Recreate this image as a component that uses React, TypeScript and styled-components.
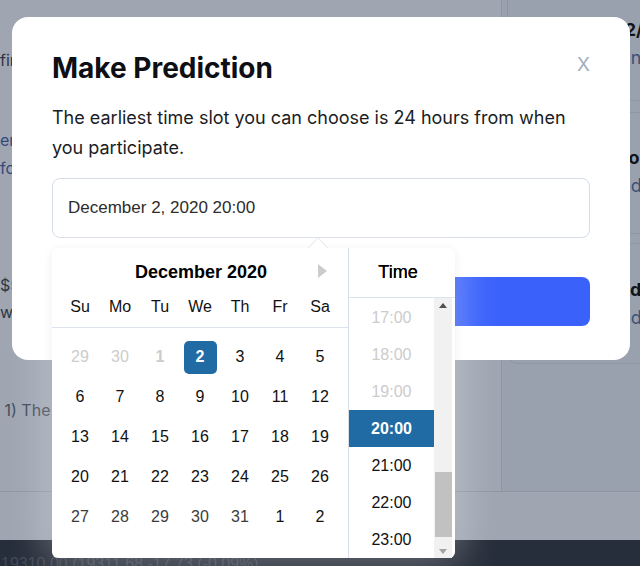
import styled, { createGlobalStyle } from "styled-components";

const GlobalStyle = createGlobalStyle`
  html, body {
    margin: 0;
    padding: 0;
  }
  body {
    width: 640px;
    height: 566px;
    overflow: hidden;
    background: #9fa6b2;
    font-family: Inter, "Noto Sans", sans-serif;
  }
  * {
    box-sizing: border-box;
  }
`;

const Page = styled.div`
  position: relative;
  width: 640px;
  height: 566px;
  display: grid;
  grid-template-rows: 492px 48px 26px;
  overflow: hidden;
`;

const Main = styled.div`
  display: grid;
  grid-template-columns: 501px 139px;
  border-bottom: 1px solid #8e96a3;
  overflow: hidden;
`;

const LeftCol = styled.div`
  display: flex;
  flex-direction: column;
  white-space: nowrap;
  overflow: hidden;
`;

const BgLine = styled.div<{ $mt: number; $tone?: "dark" | "blue" | "muted" }>`
  margin-top: ${(p) => p.$mt}px;
  font-size: 16px;
  line-height: 24px;
  color: ${(p) =>
    p.$tone === "blue" ? "#34497a" : p.$tone === "muted" ? "#444c5c" : "#2f3542"};
`;

const Sidebar = styled.div`
  border-left: 1px solid #8e96a3;
  background: #99a1ae;
  padding-left: 5px;
  display: flex;
  flex-direction: column;
  white-space: nowrap;
  overflow: hidden;
`;

const SideCard = styled.div<{ $mt: number; $h: number; $pt: number }>`
  margin-top: ${(p) => p.$mt}px;
  height: ${(p) => p.$h}px;
  width: 220px;
  flex-shrink: 0;
  padding: ${(p) => p.$pt}px 0 0 109px;
  border: 1px solid #8e96a3;
  border-radius: 10px;
`;

const SideTitle = styled.div`
  font-size: 18px;
  line-height: 28px;
  font-weight: 700;
  color: #111418;
`;

const SideSub = styled.div`
  font-size: 18px;
  line-height: 28px;
  color: #3e5078;
`;

const Gutter = styled.div``;

const Ticker = styled.div`
  background: #272e3b;
  padding: 12px 0 0 1px;
  font-family: "Liberation Sans", Arial, sans-serif;
  font-size: 16px;
  line-height: 24px;
  color: #404858;
  white-space: nowrap;
`;

const Modal = styled.div`
  position: absolute;
  top: 17px;
  left: 12px;
  width: 618px;
  background: #ffffff;
  border-radius: 16px;
  padding: 34px 40px 34px;
  z-index: 1;
`;

const ModalHeader = styled.div`
  display: flex;
  align-items: center;
  justify-content: space-between;
`;

const Title = styled.h2`
  margin: 0;
  font-size: 28px;
  line-height: 34px;
  font-weight: 700;
  color: #0d0f14;
`;

const CloseButton = styled.button`
  border: 0;
  background: none;
  padding: 0;
  font-family: Inter, sans-serif;
  font-size: 19px;
  line-height: 20px;
  color: #a3aec2;
  margin-top: -6px;
  cursor: pointer;
`;

const Description = styled.p`
  margin: 18px 0 0;
  font-size: 18px;
  line-height: 30px;
  color: #1a1d24;
`;

const Field = styled.div`
  position: relative;
  margin-top: 15px;
`;

const DateInput = styled.div`
  height: 60px;
  border: 1px solid #d6dce7;
  border-radius: 8px;
  padding: 0 15px;
  display: flex;
  align-items: center;
  font-family: "Liberation Sans", Arial, sans-serif;
  font-size: 17px;
  color: #2b2b2b;
`;

const SubmitButton = styled.button`
  display: block;
  width: 100%;
  height: 49px;
  margin-top: 39px;
  border: 0;
  border-radius: 8px;
  background: #3a62fb;
  color: #fff;
  font-family: Inter, sans-serif;
  font-size: 18px;
  font-weight: 600;
`;

const Popup = styled.div`
  position: absolute;
  top: calc(100% + 10px);
  left: 0;
  width: 403px;
  height: 310px;
  background: #fff;
  border-radius: 6px;
  box-shadow: 0 0 40px 4px rgba(255, 255, 255, 0.35), 0 2px 10px rgba(0, 0, 0, 0.08);
  display: flex;
  font-family: "Liberation Sans", Arial, sans-serif;
  z-index: 2;

  &::before,
  &::after {
    content: "";
    position: absolute;
    left: 256px;
    width: 0;
    height: 0;
    border-left: 10px solid transparent;
    border-right: 10px solid transparent;
  }
  &::before {
    top: -11px;
    border-bottom: 11px solid #dfe3ea;
  }
  &::after {
    top: -10px;
    left: 257px;
    border-left-width: 9px;
    border-right-width: 9px;
    border-bottom: 10px solid #fff;
  }
`;

const Calendar = styled.div`
  width: 297px;
  border-right: 1px solid #d8dee9;
  display: flex;
  flex-direction: column;
`;

const CalHeader = styled.div`
  position: relative;
  height: 80px;
  padding-top: 12px;
  border-bottom: 1px solid #dde3ec;
`;

const MonthTitle = styled.div`
  text-align: center;
  font-size: 18px;
  line-height: 24px;
  font-weight: 700;
  color: #000;
  padding-left: 2px;
`;

const NextArrow = styled.button`
  position: absolute;
  top: 16px;
  left: 266px;
  width: 0;
  height: 0;
  padding: 0;
  background: none;
  border-style: solid;
  border-width: 7px 0 7px 9px;
  border-color: transparent transparent transparent #cccccc;
`;

const DayNames = styled.div`
  display: grid;
  grid-template-columns: repeat(7, 40px);
  padding: 0 7px 0 8px;
  margin-top: 11px;
`;

const DayName = styled.div`
  text-align: center;
  font-size: 16px;
  line-height: 24px;
  color: #111;
`;

const DaysGrid = styled.div`
  display: grid;
  grid-template-columns: repeat(7, 40px);
  grid-auto-rows: 40px;
  padding: 9px 7px 0 8px;
`;

const DayCell = styled.div<{ $tone: "off" | "normal" | "dim" | "selected"; $today?: boolean }>`
  display: flex;
  align-items: center;
  justify-content: center;
  font-size: 16px;
  font-weight: ${(p) => (p.$today || p.$tone === "selected" ? 700 : 400)};
  color: ${(p) =>
    p.$tone === "off"
      ? "#cccccc"
      : p.$tone === "dim"
      ? "#3c3c3c"
      : p.$tone === "selected"
      ? "#ffffff"
      : "#111111"};

  span {
    width: 33px;
    height: 33px;
    display: flex;
    align-items: center;
    justify-content: center;
    border-radius: 5px;
    background: ${(p) => (p.$tone === "selected" ? "#216ba5" : "transparent")};
  }
`;

const TimeSection = styled.div`
  flex: 1;
  display: flex;
  flex-direction: column;
`;

const TimeHeader = styled.div`
  height: 50px;
  border-bottom: 1px solid #dde3ec;
  display: flex;
  align-items: center;
  justify-content: center;
  font-size: 18px;
  color: #000;
  padding-right: 8px;
  text-shadow: 0 0 0.4px #000;
`;

const TimeBody = styled.div`
  flex: 1;
  display: flex;
  overflow: hidden;
`;

const TimeList = styled.ul`
  list-style: none;
  margin: 0;
  padding: 1px 0 0;
  width: 85px;
`;

const TimeItem = styled.li<{ $tone: "off" | "normal" | "selected" }>`
  height: 37px;
  display: flex;
  align-items: center;
  justify-content: center;
  font-size: 16px;
  font-weight: ${(p) => (p.$tone === "selected" ? 700 : 400)};
  color: ${(p) =>
    p.$tone === "off" ? "#cccccc" : p.$tone === "selected" ? "#ffffff" : "#111111"};
  background: ${(p) => (p.$tone === "selected" ? "#216ba5" : "transparent")};
`;

const Scrollbar = styled.div`
  width: 18px;
  background: #f1f1f1;
  display: flex;
  flex-direction: column;
`;

const ScrollArrow = styled.div<{ $dir: "up" | "down" }>`
  height: 17px;
  display: flex;
  align-items: center;
  justify-content: center;

  &::after {
    content: "";
    width: 0;
    height: 0;
    border-left: 4.5px solid transparent;
    border-right: 4.5px solid transparent;
    ${(p) =>
      p.$dir === "up"
        ? "border-bottom: 5px solid #505050; margin-top: -2px;"
        : "border-top: 5px solid #a3a3a3; margin-top: 4px;"}
  }
`;

const ScrollTrack = styled.div`
  flex: 1;
  padding-top: 157px;
`;

const ScrollThumb = styled.div`
  height: 65px;
  margin-left: 1px;
  background: #c1c1c1;
`;

type Day = { n: number; tone: "off" | "normal" | "dim" | "selected"; today?: boolean };

const weeks: Day[][] = [
  [
    { n: 29, tone: "off" },
    { n: 30, tone: "off" },
    { n: 1, tone: "off", today: true },
    { n: 2, tone: "selected" },
    { n: 3, tone: "normal" },
    { n: 4, tone: "normal" },
    { n: 5, tone: "normal" },
  ],
  [6, 7, 8, 9, 10, 11, 12].map((n) => ({ n, tone: "normal" as const })),
  [13, 14, 15, 16, 17, 18, 19].map((n) => ({ n, tone: "normal" as const })),
  [20, 21, 22, 23, 24, 25, 26].map((n) => ({ n, tone: "normal" as const })),
  [27, 28, 29, 30, 31, 1, 2].map((n, i) => ({ n, tone: i < 5 ? ("dim" as const) : ("normal" as const) })),
];

const times: { t: string; tone: "off" | "normal" | "selected" }[] = [
  { t: "17:00", tone: "off" },
  { t: "18:00", tone: "off" },
  { t: "19:00", tone: "off" },
  { t: "20:00", tone: "selected" },
  { t: "21:00", tone: "normal" },
  { t: "22:00", tone: "normal" },
  { t: "23:00", tone: "normal" },
];

const dayNames = ["Su", "Mo", "Tu", "We", "Th", "Fr", "Sa"];

export default function App() {
  return (
    <>
      <GlobalStyle />
      <Page>
        <Main>
          <LeftCol>
            <BgLine $mt={48}>fine</BgLine>
            <BgLine $mt={56} $tone="blue">end</BgLine>
            <BgLine $mt={4} $tone="blue">for</BgLine>
            <BgLine $mt={93}>$5</BgLine>
            <BgLine $mt={3}>win</BgLine>
            <BgLine $mt={74} $tone="muted">&nbsp;1) The</BgLine>
          </LeftCol>
          <Sidebar>
            <SideCard $mt={-12} $h={113} $pt={27}>
              <SideTitle>12/02</SideTitle>
              <SideSub>On</SideSub>
            </SideCard>
            <SideCard $mt={11} $h={122} $pt={31}>
              <SideTitle>Po</SideTitle>
              <SideSub>Od</SideSub>
            </SideCard>
            <SideCard $mt={9} $h={121} $pt={32}>
              <SideTitle>Ad</SideTitle>
              <SideSub>Od</SideSub>
            </SideCard>
          </Sidebar>
        </Main>
        <Gutter />
        <Ticker>19310.00 (19311.68 -17.73 (-0.09%)</Ticker>

        <Modal>
          <ModalHeader>
            <Title>Make Prediction</Title>
            <CloseButton>X</CloseButton>
          </ModalHeader>
          <Description>
            The earliest time slot you can choose is 24 hours from when you participate.
          </Description>
          <Field>
            <DateInput>December 2, 2020 20:00</DateInput>
            <Popup>
              <Calendar>
                <CalHeader>
                  <MonthTitle>December 2020</MonthTitle>
                  <NextArrow aria-label="Next Month" />
                  <DayNames>
                    {dayNames.map((d) => (
                      <DayName key={d}>{d}</DayName>
                    ))}
                  </DayNames>
                </CalHeader>
                <DaysGrid>
                  {weeks.flat().map((d, i) => (
                    <DayCell key={i} $tone={d.tone} $today={d.today}>
                      <span>{d.n}</span>
                    </DayCell>
                  ))}
                </DaysGrid>
              </Calendar>
              <TimeSection>
                <TimeHeader>Time</TimeHeader>
                <TimeBody>
                  <TimeList>
                    {times.map((t) => (
                      <TimeItem key={t.t} $tone={t.tone}>
                        {t.t}
                      </TimeItem>
                    ))}
                  </TimeList>
                  <Scrollbar>
                    <ScrollArrow $dir="up" />
                    <ScrollTrack>
                      <ScrollThumb />
                    </ScrollTrack>
                    <ScrollArrow $dir="down" />
                  </Scrollbar>
                </TimeBody>
              </TimeSection>
            </Popup>
          </Field>
          <SubmitButton>Submit</SubmitButton>
        </Modal>
      </Page>
    </>
  );
}
